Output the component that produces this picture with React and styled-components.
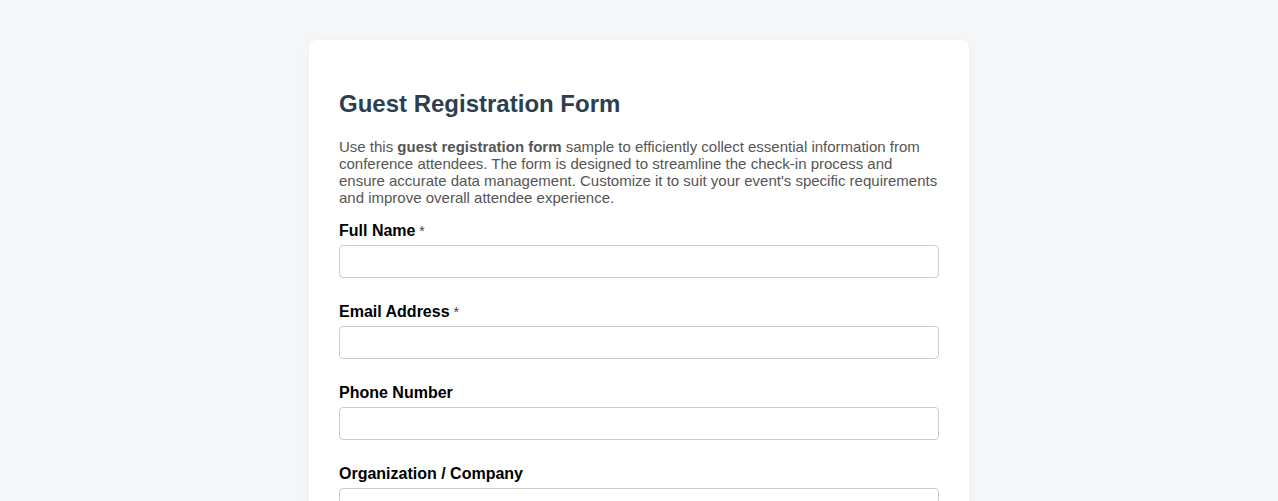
import React from "react";
import styled, { createGlobalStyle } from "styled-components";

const Global = createGlobalStyle`
  html, body { margin: 0; padding: 0; }
  body {
    background: #f5f6f8;
    font-family: "Liberation Sans", Arial, sans-serif;
  }
`;

const Page = styled.div`
  display: flex;
  justify-content: center;
  padding-top: 40px;
`;

const Card = styled.div`
  width: 600px;
  background: #ffffff;
  border-radius: 8px;
  padding: 30px;
  box-shadow: 0 2px 10px rgba(0, 0, 0, 0.04);
`;

const Title = styled.h2`
  font-size: 24px;
  font-weight: bold;
  color: #2c3e50;
  margin: 20px 0;
`;

const Intro = styled.p`
  font-size: 15px;
  line-height: 17px;
  color: #555555;
  margin: 0 0 16px;
`;

const Group = styled.div`
  margin-bottom: 25px;
`;

const Label = styled.label`
  display: block;
  font-size: 16px;
  line-height: 18px;
  font-weight: bold;
  color: #000000;
  margin-bottom: 5px;
`;

const Required = styled.span`
  font-weight: normal;
  font-size: 14px;
  color: #444444;
`;

const Input = styled.input`
  display: block;
  box-sizing: border-box;
  width: 100%;
  height: 33px;
  padding: 8px;
  font-size: 14px;
  font-family: "Liberation Sans", Arial, sans-serif;
  border: 1px solid #cccccc;
  border-radius: 4px;
  background: #ffffff;
  outline: none;
`;

const fields = [
  { label: "Full Name", required: true, type: "text" },
  { label: "Email Address", required: true, type: "email" },
  { label: "Phone Number", type: "tel" },
  { label: "Organization / Company", type: "text" },
  { label: "Job Title", type: "text" },
];

export default function App() {
  return (
    <>
      <Global />
      <Page>
        <Card>
          <Title>Guest Registration Form</Title>
          <Intro>
            Use this <strong>guest registration form</strong> sample to efficiently collect
            essential information from conference attendees. The form is designed to
            streamline the check-in process and ensure accurate data management. Customize
            it to suit your event's specific requirements and improve overall attendee
            experience.
          </Intro>
          <form>
            {fields.map((f) => (
              <Group key={f.label}>
                <Label>
                  {f.label}
                  {f.required && <Required> *</Required>}
                </Label>
                <Input type={f.type} />
              </Group>
            ))}
          </form>
        </Card>
      </Page>
    </>
  );
}
